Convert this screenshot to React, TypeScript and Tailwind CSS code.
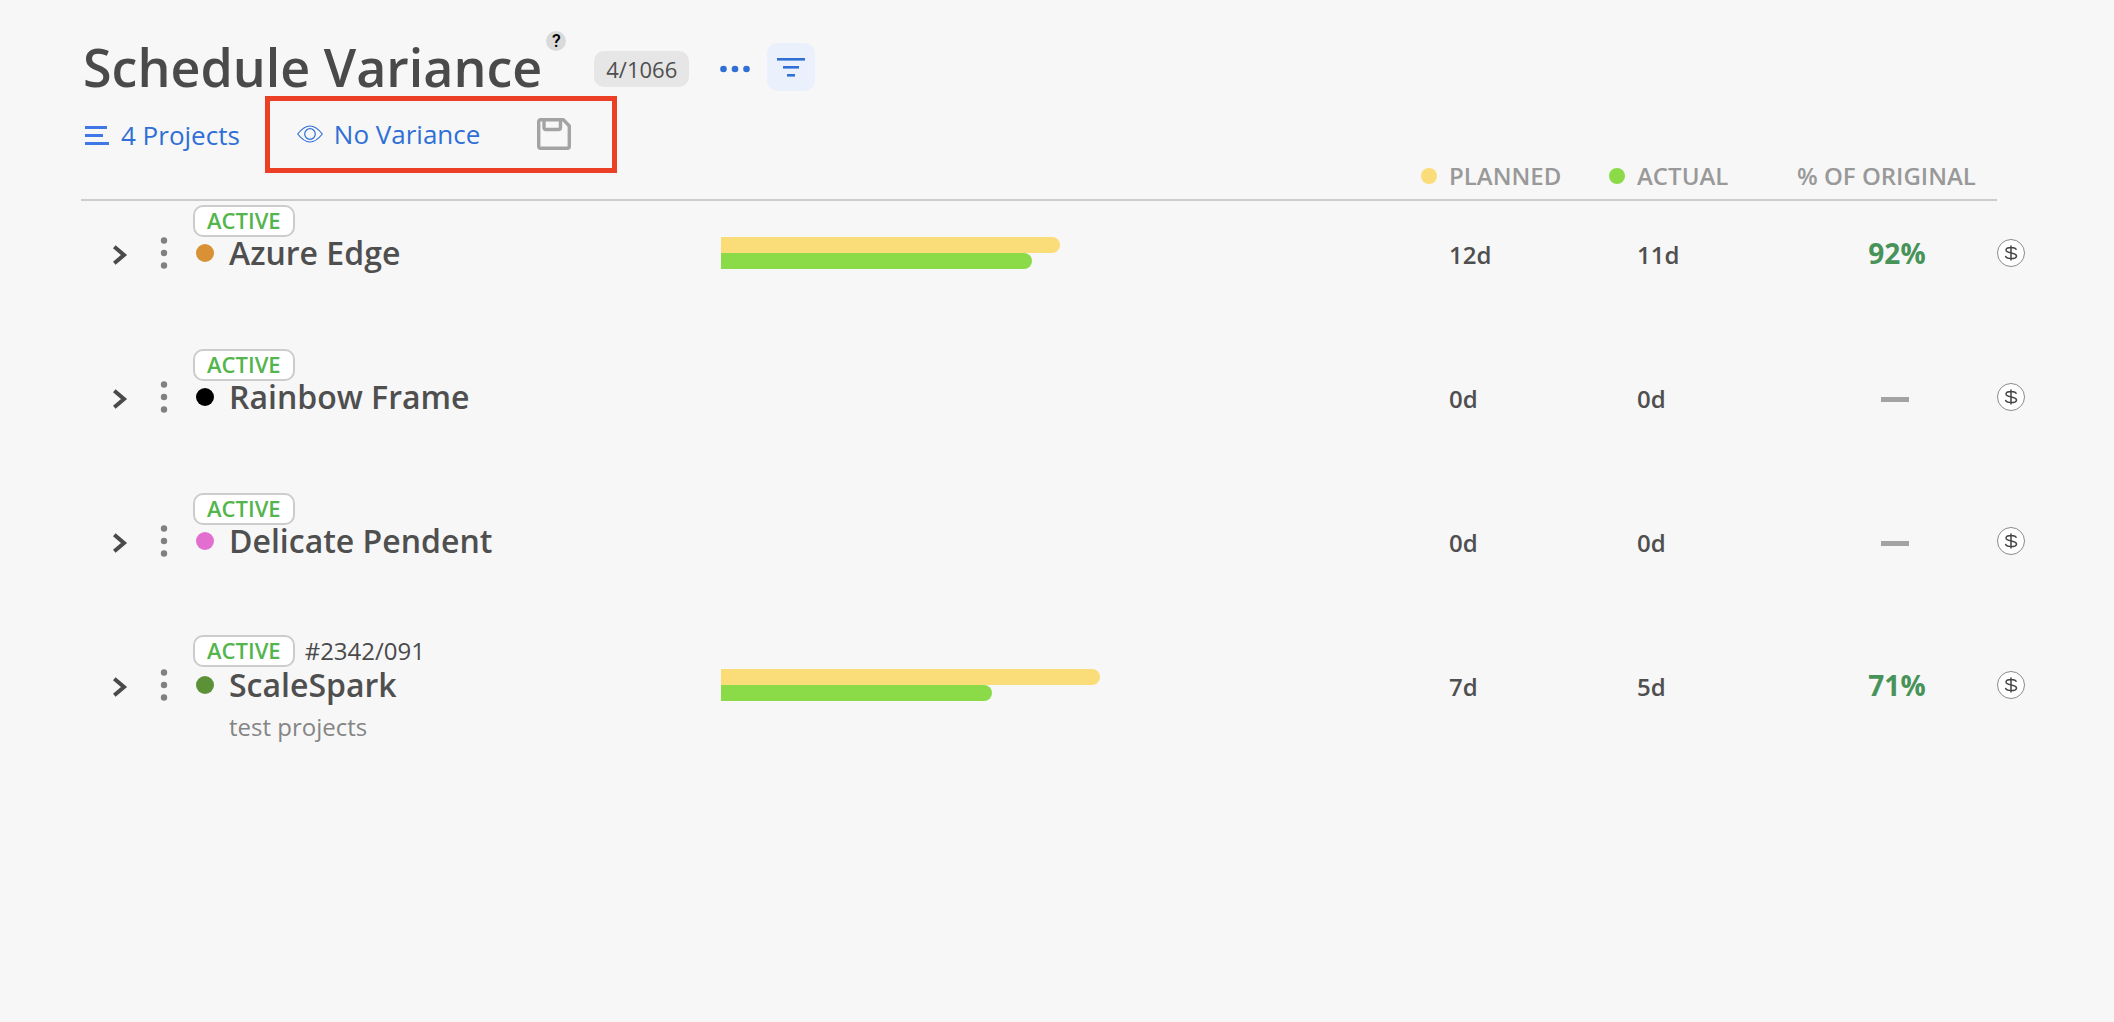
import { useState } from "react";

type Project = {
  name: string;
  color: string;
  planned: number;
  actual: number;
  code?: string;
  description?: string;
  plannedWidth: number;
  actualWidth: number;
};

const projects: Project[] = [
  { name: "Azure Edge", color: "#d99135", planned: 12, actual: 11, plannedWidth: 48.4, actualWidth: 44.4 },
  { name: "Rainbow Frame", color: "#000000", planned: 0, actual: 0, plannedWidth: 0, actualWidth: 0 },
  { name: "Delicate Pendent", color: "#e26fcf", planned: 0, actual: 0, plannedWidth: 0, actualWidth: 0 },
  {
    name: "ScaleSpark",
    color: "#5c9138",
    planned: 7,
    actual: 5,
    code: "#2342/091",
    description: "test projects",
    plannedWidth: 54.1,
    actualWidth: 38.7,
  },
];

function ListIcon() {
  return (
    <svg width="24" height="19" viewBox="0 0 24 19" fill="#3f78e6" aria-hidden="true">
      <rect width="22" height="3" />
      <rect y="8" width="18" height="3" />
      <rect y="16" width="24" height="3" />
    </svg>
  );
}

function EyeIcon() {
  return (
    <svg width="26" height="18" viewBox="0 0 26 18" fill="none" stroke="#2f6fd6" strokeWidth="1.2" aria-hidden="true">
      <path d="M.7 9C5 3.500 8.800 1 13 1s8 2.500 12.300 8C21 14.500 17.200 17 13 17S5 14.500.7 9Z" />
      <circle cx="13" cy="9" r="5.300" />
    </svg>
  );
}

function SaveIcon() {
  return (
    <svg width="34" height="32" viewBox="0 0 34 32" fill="none" stroke="#a3a3a3" strokeLinejoin="round" aria-hidden="true">
      <path strokeWidth="3.400" d="M3.700 1.700h22.600L32.300 8v20.300a2 2 0 0 1-2 2H3.700a2 2 0 0 1-2-2V3.700a2 2 0 0 1 2-2Z" />
      <path strokeWidth="3.400" d="M7 3v6.500a2 2 0 0 0 2 2h12.500a2 2 0 0 0 2-2V3" />
    </svg>
  );
}

function MoreIcon() {
  return (
    <svg width="30" height="8" viewBox="0 0 30 8" fill="#2f6fd6" aria-hidden="true">
      <circle cx="3.500" cy="4" r="3.300" />
      <circle cx="15" cy="4" r="3.300" />
      <circle cx="26.500" cy="4" r="3.300" />
    </svg>
  );
}

function FilterIcon() {
  return (
    <svg width="28" height="19" viewBox="0 0 28 19" fill="#2f6fd6" aria-hidden="true">
      <rect y="0" width="28" height="2.600" />
      <rect x="6" y="8" width="16" height="2.600" />
      <rect x="10" y="16" width="8" height="2.600" />
    </svg>
  );
}

function ChevronIcon() {
  return (
    <svg width="15" height="20" viewBox="0 0 15 20" fill="none" stroke="#4a4a4a" strokeWidth="4" aria-hidden="true">
      <path d="M1.300 1.800 11 10l-9.700 8.200" strokeLinecap="butt" />
    </svg>
  );
}

function KebabIcon() {
  return (
    <svg width="8" height="32" viewBox="0 0 8 32" fill="#808080" aria-hidden="true">
      <circle cx="4" cy="3.500" r="3.200" />
      <circle cx="4" cy="16" r="3.200" />
      <circle cx="4" cy="28.500" r="3.200" />
    </svg>
  );
}

function DollarIcon() {
  return (
    <svg width="28" height="28" viewBox="0 0 28 28" fill="none" aria-hidden="true">
      <circle cx="14" cy="14" r="13.500" fill="#fff" stroke="#8a8a8a" />
      <path
        stroke="#444"
        strokeWidth="1.500"
        d="M14 6.500v15M19.300 10.800c-.3-1.500-2-2.400-5.300-2.400-3.200 0-5 .9-5 2.600 0 4 10.500 1.900 10.500 6 0 1.700-2 2.600-5.400 2.600-3.500 0-5.300-1-5.600-2.700"
      />
    </svg>
  );
}

function ProjectRow({ project }: { project: Project }) {
  const [open, setOpen] = useState(false);
  const { name, color, planned, actual, code, description } = project;
  return (
    <tr className="h-36 align-top">
      <td className="p-0">
        <div className="flex pl-8">
          <button
            type="button"
            aria-label={`Expand ${name}`}
            aria-expanded={open}
            onClick={() => setOpen(!open)}
            className="mt-9 flex h-9 w-[15px] items-center"
          >
            <ChevronIcon />
          </button>
          <button type="button" aria-label={`${name} menu`} className="mt-9 ml-8 flex h-8 w-2 items-center">
            <KebabIcon />
          </button>
          <div className="ml-[25px] whitespace-nowrap">
            <div className={code ? "flex h-9 items-center gap-2.5" : "flex h-9 items-end"}>
              <span className="flex h-8 items-start rounded-[10px] border-2 border-[#cccccc] bg-white px-3 text-[22px] leading-[26px] font-semibold text-[#54b54e]">
                ACTIVE
              </span>
              {code && <span className="text-2xl text-[#4a4a4a]">{code}</span>}
            </div>
            <div className="flex h-8 items-center gap-[15px] pl-[3px]">
              <span className="size-[18px] rounded-full" style={{ backgroundColor: color }} />
              <a href="#project" className="text-[32px] leading-8 font-semibold text-[#4f4f4f]">
                {name}
              </a>
            </div>
            {description && <p className="mt-2.5 pl-9 text-2xl text-[#858585]">{description}</p>}
          </div>
        </div>
      </td>
      <td className="p-0 pt-9">
        <div className="h-4 rounded-r-full bg-[#fadd79]" style={{ width: `${project.plannedWidth}%` }} />
        <div className="h-4 rounded-r-full bg-[#8bda48]" style={{ width: `${project.actualWidth}%` }} />
      </td>
      <td className="p-0 pt-9 pl-7 text-2xl leading-9 font-semibold text-[#4f4f4f]">{planned}d</td>
      <td className="p-0 pt-9 pl-7 text-2xl leading-9 font-semibold text-[#4f4f4f]">{actual}d</td>
      <td className="p-0 pt-9">
        {planned > 0 ? (
          <div className="text-center text-[28px] leading-8 font-bold text-[#479359]">
            {Math.floor((actual / planned) * 100 + 0.5)}%
          </div>
        ) : (
          <div className="flex h-9 items-center justify-center pr-1">
            <span className="h-[5px] w-7 bg-[#a3a3a3]" />
          </div>
        )}
      </td>
      <td className="p-0 pt-9">
        <button type="button" aria-label={`${name} budget`} className="flex h-8 items-center">
          <DollarIcon />
        </button>
      </td>
    </tr>
  );
}

export default function App() {
  return (
    <main className="min-h-screen bg-[#f7f7f7] pt-[38px] pr-[89px] pl-[81px] font-['Open_Sans',sans-serif]">
      <header>
        <div className="flex h-[58px] items-center pl-0.5">
          <h1 className="relative text-[52px] leading-[58px] font-semibold text-[#4a4a4a]">
            Schedule Variance
            <button
              type="button"
              aria-label="Help"
              className="absolute -top-[7px] left-full ml-1 flex size-5 items-center justify-center rounded-full bg-[#dadada] font-['Roboto',sans-serif] text-lg leading-5 font-medium text-black"
            >
              ?
            </button>
          </h1>
          <span className="mt-1 ml-[52px] flex h-9 items-center rounded-[10px] bg-[#e6e6e6] px-3 text-[22px] text-[#4f4f4f]">
            4/1066
          </span>
          <button type="button" aria-label="More options" className="mt-1 ml-[31px] flex h-9 items-center">
            <MoreIcon />
          </button>
          <button
            type="button"
            aria-label="Filter"
            className="ml-[17px] flex size-12 items-center justify-center rounded-[10px] bg-[#eaf1fc]"
          >
            <FilterIcon />
          </button>
        </div>
        <div className="flex h-16 items-start text-[26px] leading-9 text-[#2f6fd6]">
          <button type="button" className="mt-[21px] ml-1 flex h-9 items-center gap-3 whitespace-nowrap">
            <ListIcon />
            4 Projects
          </button>
          <div className="ml-[25px] flex h-[77px] items-center border-[5px] border-[#eb4026] pr-[41px] pb-0.5 pl-[27px]">
            <button type="button" className="flex items-center gap-[11px] whitespace-nowrap">
              <EyeIcon />
              No Variance
            </button>
            <button type="button" aria-label="Save view" className="ml-[57px]">
              <SaveIcon />
            </button>
          </div>
        </div>
      </header>
      <table className="w-full table-fixed border-separate border-spacing-0 text-left">
        <colgroup>
          <col className="w-[640px]" />
          <col />
          <col className="w-[188px]" />
          <col className="w-[188px]" />
          <col className="w-[200px]" />
          <col className="w-7" />
        </colgroup>
        <thead className="text-2xl leading-8 text-[#999999]">
          <tr>
            <th scope="col" aria-label="Project" className="border-b-2 border-[#cccccc] p-0" />
            <th scope="col" aria-label="Duration" className="border-b-2 border-[#cccccc] p-0" />
            <th scope="col" className="border-b-2 border-[#cccccc] p-0 pb-[7px] font-semibold">
              <div className="flex items-center gap-3">
                <span className="size-4 rounded-full bg-[#fadd79]" />
                PLANNED
              </div>
            </th>
            <th scope="col" className="border-b-2 border-[#cccccc] p-0 pb-[7px] font-semibold">
              <div className="flex items-center gap-3">
                <span className="size-4 rounded-full bg-[#8bda48]" />
                ACTUAL
              </div>
            </th>
            <th scope="col" className="border-b-2 border-[#cccccc] p-0 pb-[7px] font-semibold whitespace-nowrap">
              % OF ORIGINAL
            </th>
            <th scope="col" aria-label="Budget" className="p-0" />
          </tr>
        </thead>
        <tbody>
          {projects.map((project) => (
            <ProjectRow key={project.name} project={project} />
          ))}
        </tbody>
      </table>
    </main>
  );
}
